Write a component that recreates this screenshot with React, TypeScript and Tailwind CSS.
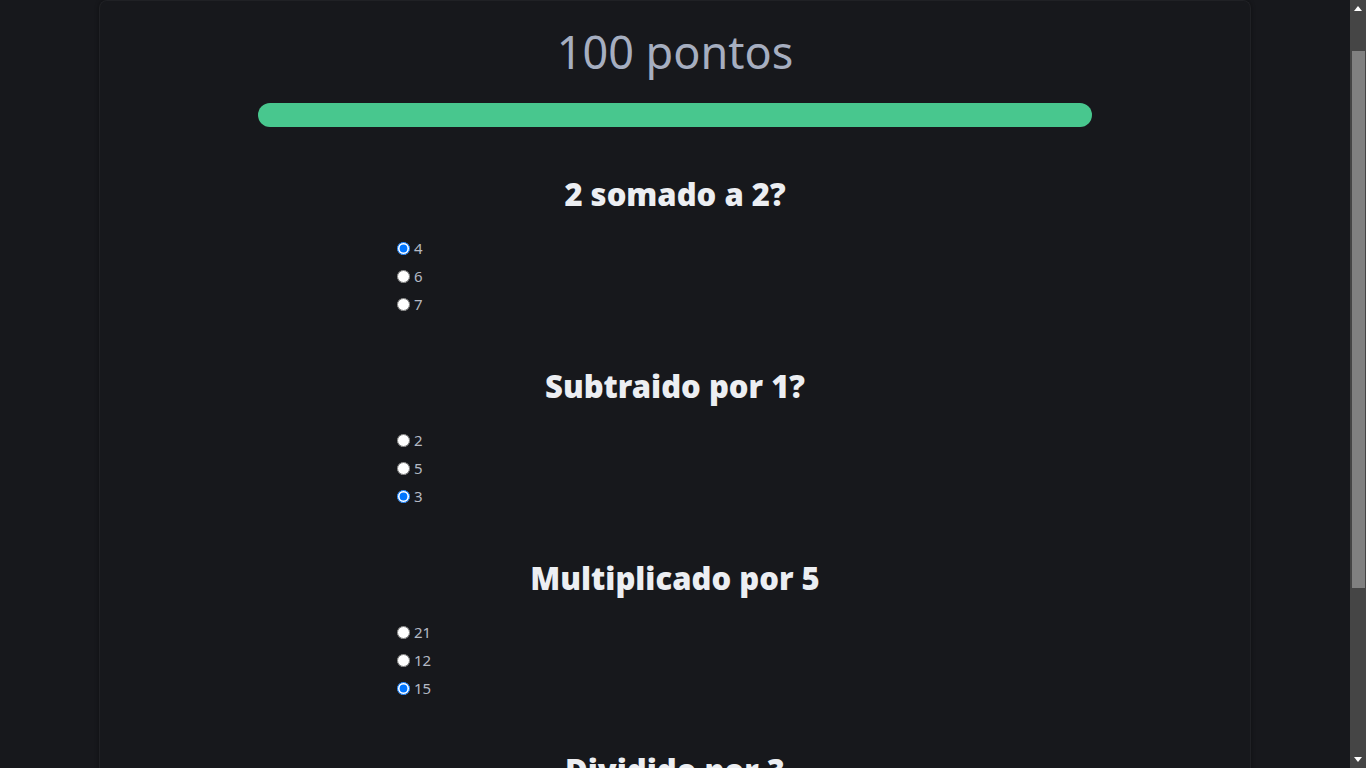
import React from "react";

type Q = { title: string; name: string; options: string[]; checked: number };

const questions: Q[] = [
  { title: "2 somado a 2?", name: "q1", options: ["4", "6", "7"], checked: 0 },
  { title: "Subtraido por 1?", name: "q2", options: ["2", "5", "3"], checked: 2 },
  { title: "Multiplicado por 5", name: "q3", options: ["21", "12", "15"], checked: 2 },
  { title: "Dividido por 3", name: "q4", options: ["5", "3", "4"], checked: 0 },
];

function Scrollbar() {
  return (
    <div className="w-4 h-screen shrink-0 bg-[#454545] flex flex-col items-center">
      <div className="h-[17px] w-full flex items-center justify-center">
        <svg width="8" height="5" viewBox="0 0 8 5">
          <polygon points="4,0 8,5 0,5" fill="#ffffff" />
        </svg>
      </div>
      <div className="mt-[34px] w-[13px] h-[537px] bg-[#808080]" />
      <div className="flex-1" />
      <div className="h-[17px] w-full flex items-center justify-center">
        <svg width="8" height="5" viewBox="0 0 8 5">
          <polygon points="0,0 8,0 4,5" fill="#ffffff" />
        </svg>
      </div>
    </div>
  );
}

export default function App() {
  return (
    <div
      className="h-screen flex bg-[#17181c] overflow-hidden"
      style={{ fontFamily: '"Noto Sans", "Open Sans", sans-serif' }}
    >
      <div className="flex-1 h-screen overflow-hidden">
        <div className="max-w-6xl mx-auto min-h-[1050px] rounded-t-lg border-x border-t border-[#202125] bg-[#17181c] shadow-[0_0_4px_rgba(0,0,0,0.4)] pb-16">
          <h1 className="pt-[18px] text-center text-[45px] leading-[66px] font-normal text-[#a6aec0]">
            100 pontos
          </h1>
          <div className="mt-[18px] mx-auto w-[834px] h-6 rounded-full bg-[#48c78e]" />
          <div className="mt-[47px]">
            {questions.map((q) => (
              <div key={q.name} className="mb-[48px]">
                <h2 className="text-center text-[31px] leading-10 font-black text-[#eceef2]">
                  {q.title}
                </h2>
                <div className="w-[566px] mx-auto mt-[20px] flex flex-col">
                  {q.options.map((o, i) => (
                    <label
                      key={o}
                      className="flex items-center h-7 text-[15px] text-[#b4b9c4]"
                    >
                      <input
                        type="radio"
                        name={q.name}
                        defaultChecked={i === q.checked}
                        className="[color-scheme:light] w-[13px] h-[13px] ml-[5px] mr-[4px] m-0"
                      />
                      <span>{o}</span>
                    </label>
                  ))}
                </div>
              </div>
            ))}
          </div>
        </div>
      </div>
      <Scrollbar />
    </div>
  );
}
